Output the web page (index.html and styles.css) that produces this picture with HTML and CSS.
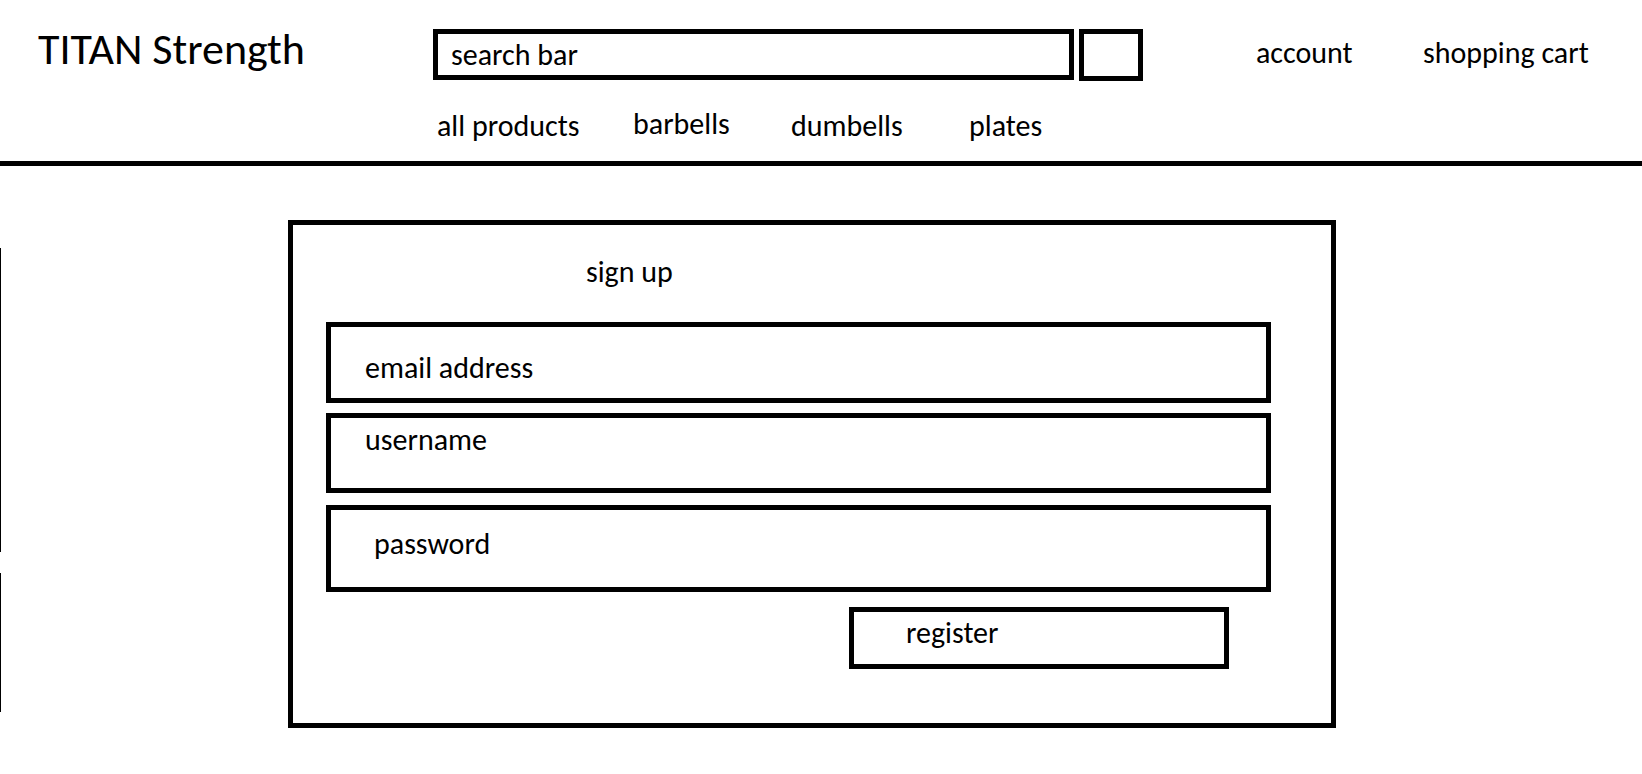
FILE: index.html
```html
<!DOCTYPE html>
<html lang="en">
<head>
    <meta charset="UTF-8">
    <meta name="viewport" content="width=device-width, initial-scale=1.0">
    <title>TITAN Strength - Sign Up</title>
    <link rel="stylesheet" href="styles.css">
</head>
<body>
    <header class="site-header">
        <div class="brand">TITAN Strength</div>

        <div class="header-center">
            <form class="search" onsubmit="return false;">
                <div class="search-bar">search bar</div>
                <button class="search-btn" type="submit" aria-label="search"></button>
            </form>
            <nav class="category-nav">
                <a href="#" class="nav-item">all products</a>
                <a href="#" class="nav-item nav-raised">barbells</a>
                <a href="#" class="nav-item">dumbells</a>
                <a href="#" class="nav-item">plates</a>
            </nav>
        </div>

        <div class="header-links">
            <a href="#" class="header-link account-link">account</a>
            <a href="#" class="header-link">shopping cart</a>
        </div>
    </header>

    <main class="page">
        <div class="edge-rail">
            <span class="rail-seg rail-top"></span>
            <span class="rail-seg rail-bottom"></span>
        </div>

        <section class="signup-card">
            <h2 class="signup-title">sign up</h2>
            <div class="field field-email">email address</div>
            <div class="field field-username">username</div>
            <div class="field field-password">password</div>
            <button class="register-btn" type="button">register</button>
        </section>
    </main>
</body>
</html>
```

FILE: styles.css
```css
* {
    margin: 0;
    padding: 0;
    box-sizing: border-box;
}

body {
    font-family: Calibri, Carlito, Lato, sans-serif;
    font-size: 30px;
    line-height: 1.2;
    color: #000;
    background: #fff;
}

a {
    color: #000;
    text-decoration: none;
}

/* header */

.site-header {
    display: flex;
    align-items: flex-start;
    height: 166px;
    padding-left: 38px;
    border-bottom: 5px solid #000;
}

.brand {
    width: 395px;
    margin-top: 23px;
    font-size: 44px;
}

.header-center {
    width: 710px;
    margin-top: 29px;
}

.search {
    display: flex;
    gap: 5px;
}

.search-bar {
    display: flex;
    align-items: center;
    width: 641px;
    height: 51px;
    padding-left: 13px;
    border: 5px solid #000;
}

.search-btn {
    width: 64px;
    height: 52px;
    border: 5px solid #000;
    background: #fff;
}

.category-nav {
    display: grid;
    grid-template-columns: 196px 158px 178px auto;
    margin-top: 27px;
    padding-left: 4px;
}

.nav-raised {
    margin-top: -2px;
}

.header-links {
    display: flex;
    margin-top: 35px;
    margin-left: 113px;
}

.account-link {
    width: 167px;
}

/* sign up card */

.page {
    display: flex;
    align-items: flex-start;
}

.edge-rail {
    display: flex;
    flex-direction: column;
    gap: 21px;
    width: 1px;
    margin-top: 82px;
}

.rail-seg {
    display: block;
    width: 1px;
    background: #000;
}

.rail-top {
    height: 304px;
}

.rail-bottom {
    height: 139px;
}

.signup-card {
    width: 1048px;
    margin-top: 54px;
    margin-left: 287px;
    padding: 29px 60px 54px 33px;
    border: 5px solid #000;
}

.signup-title {
    margin-left: 260px;
    margin-bottom: 32px;
    font-size: 30px;
    font-weight: normal;
}

.field {
    width: 945px;
    padding-left: 34px;
    border: 5px solid #000;
}

.field-email {
    height: 81px;
    padding-top: 23px;
    margin-bottom: 10px;
}

.field-username {
    height: 80px;
    padding-top: 4px;
    margin-bottom: 12px;
}

.field-password {
    height: 87px;
    padding-top: 16px;
    padding-left: 43px;
    margin-bottom: 15px;
}

.register-btn {
    display: block;
    width: 380px;
    height: 62px;
    margin-left: 523px;
    padding: 3px 0 13px 52px;
    border: 5px solid #000;
    background: #fff;
    font: inherit;
    text-align: left;
}
```
